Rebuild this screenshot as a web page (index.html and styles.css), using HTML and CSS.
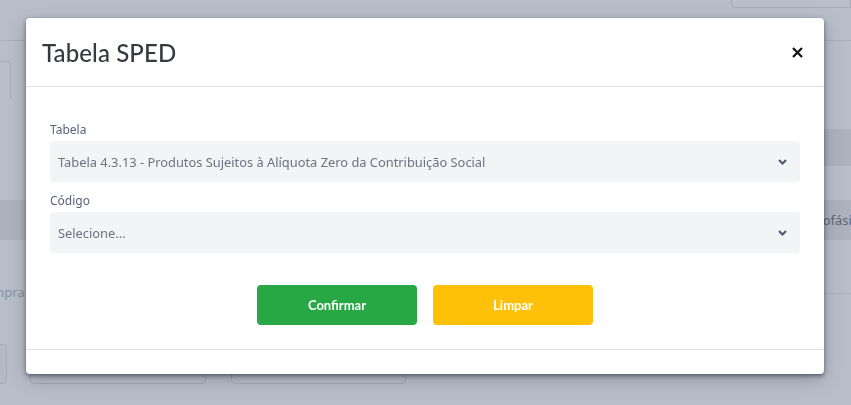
FILE: index.html
```html
<!DOCTYPE html>
<html lang="pt-BR">
<head>
<meta charset="utf-8">
<title>Tabela SPED</title>
<link rel="stylesheet" href="styles.css">
</head>
<body>
<div class="page">
  <div class="topbar"><div class="topbtn"></div></div>
  <div class="tabs"><div class="tab"></div></div>
  <div class="thead-row"><div class="thead-gap"></div><div class="thead"></div></div>
  <div class="band"><span class="band-text">Monofásico</span></div>
  <div class="textrow"><span class="faded">Compra</span><div class="rline"></div></div>
  <div class="boxes"><div class="box box-a"></div><div class="box box-b"></div><div class="box box-c"></div></div>
</div>

<div class="modal">
  <div class="modal-header">
    <h1 class="modal-title">Tabela SPED</h1>
    <button class="close" aria-label="Fechar">
      <svg width="11" height="11" viewBox="0 0 11 11"><path d="M1 1L10 10M10 1L1 10" stroke="#111" stroke-width="2.2" stroke-linecap="butt"/></svg>
    </button>
  </div>
  <div class="modal-body">
    <label class="label">Tabela</label>
    <div class="select">
      <span>Tabela 4.3.13 - Produtos Sujeitos à Alíquota Zero da Contribuição Social</span>
      <svg class="chev" width="9" height="6" viewBox="0 0 9 6"><path d="M1 1L4.5 4.5L8 1" fill="none" stroke="#4b5672" stroke-width="2"/></svg>
    </div>
    <label class="label label-2">Código</label>
    <div class="select">
      <span>Selecione...</span>
      <svg class="chev" width="9" height="6" viewBox="0 0 9 6"><path d="M1 1L4.5 4.5L8 1" fill="none" stroke="#4b5672" stroke-width="2"/></svg>
    </div>
    <div class="actions">
      <button class="btn btn-green">Confirmar</button>
      <button class="btn btn-yellow">Limpar</button>
    </div>
  </div>
  <div class="modal-footer"></div>
</div>
</body>
</html>
```

FILE: styles.css
```css
* { box-sizing: border-box; }
html, body { margin: 0; padding: 0; }
body {
  width: 851px;
  height: 405px;
  overflow: hidden;
  background: #b9bfca;
  font-family: "Noto Sans", "Open Sans", sans-serif;
}
.page { width: 851px; height: 405px; overflow: hidden; }
.topbar {
  height: 41px;
  border-bottom: 1px solid #a9afba;
  display: flex;
  justify-content: flex-end;
}
.topbtn {
  width: 120px;
  height: 8px;
  border: 1px solid #a6acb7;
  border-top: none;
  border-radius: 0 0 0 4px;
}
.tabs { height: 57px; padding-top: 20px; }
.tab {
  width: 11px;
  height: 37px;
  border: 1px solid #a6acb7;
  border-left: none;
  border-bottom: none;
  border-radius: 0 4px 0 0;
}
.thead-row { display: flex; height: 37px; margin-top: 31px; }
.thead-gap { width: 824px; }
.thead { flex: 1; background: #adb3be; }
.band {
  height: 40px;
  margin-top: 34px;
  background: #adb3be;
  display: flex;
  align-items: center;
  padding-left: 795px;
  overflow: hidden;
  white-space: nowrap;
}
.band-text { font-size: 13px; color: #5f6675; }
.textrow { height: 104px; padding-top: 43px; position: relative; }
.faded {
  display: block;
  font-size: 13px;
  line-height: 18px;
  color: #8b919c;
  margin-left: -24px;
}
.rline { position: absolute; left: 824px; right: 0; top: 53px; height: 1px; background: #acb2bd; }
.boxes { display: flex; height: 40px; }
.box { border: 1px solid #a6acb7; border-radius: 4px; height: 40px; }
.box-a { width: 7px; border-left: none; border-radius: 0 4px 4px 0; background: #b4bac5; }
.box-b { width: 176px; margin-left: 23px; }
.box-c { width: 175px; margin-left: 25px; }

.modal {
  position: fixed;
  left: 26px;
  top: 18px;
  width: 798px;
  height: 356px;
  background: #fff;
  border-radius: 4px;
  box-shadow: 0 2px 4px rgba(30, 35, 50, 0.55), 0 6px 20px rgba(30, 35, 50, 0.25);
  display: flex;
  flex-direction: column;
}
.modal-header {
  height: 69px;
  border-bottom: 1px solid #dee2e6;
  display: flex;
  align-items: center;
  justify-content: space-between;
  padding: 0 21px 0 16px;
}
.modal-title {
  margin: 0;
  font-family: "Lato", "Noto Sans", sans-serif;
  font-weight: 500;
  font-size: 24px;
  color: #343a40;
  letter-spacing: 0.1px;
}
.close {
  border: none;
  background: none;
  padding: 0;
  width: 11px;
  height: 11px;
  display: flex;
  cursor: pointer;
}
.modal-body {
  flex: 1;
  padding: 34px 24px 24px;
  display: flex;
  flex-direction: column;
  border-bottom: 1px solid #dee2e6;
}
.label {
  font-size: 12px;
  line-height: 18px;
  color: #58627a;
  margin-bottom: 2px;
}
.label-2 { margin-top: 10px; }
.select {
  height: 41px;
  background: #f3f4f6;
  border-radius: 4px;
  display: flex;
  align-items: center;
  justify-content: space-between;
  padding: 0 13px 0 8px;
  font-size: 12.85px;
  color: #6b7280;
}
.chev { flex: none; }
.actions {
  display: flex;
  justify-content: center;
  gap: 16px;
  margin-top: 32px;
}
.btn {
  width: 160px;
  height: 40px;
  border: none;
  border-radius: 4px;
  color: #fff;
  font-family: "Lato", "Noto Sans", sans-serif;
  font-weight: 700;
  font-size: 13px;
}
.btn-green { background: #28a745; }
.btn-yellow { background: #ffc107; }
.modal-footer { height: 24px; }
```
